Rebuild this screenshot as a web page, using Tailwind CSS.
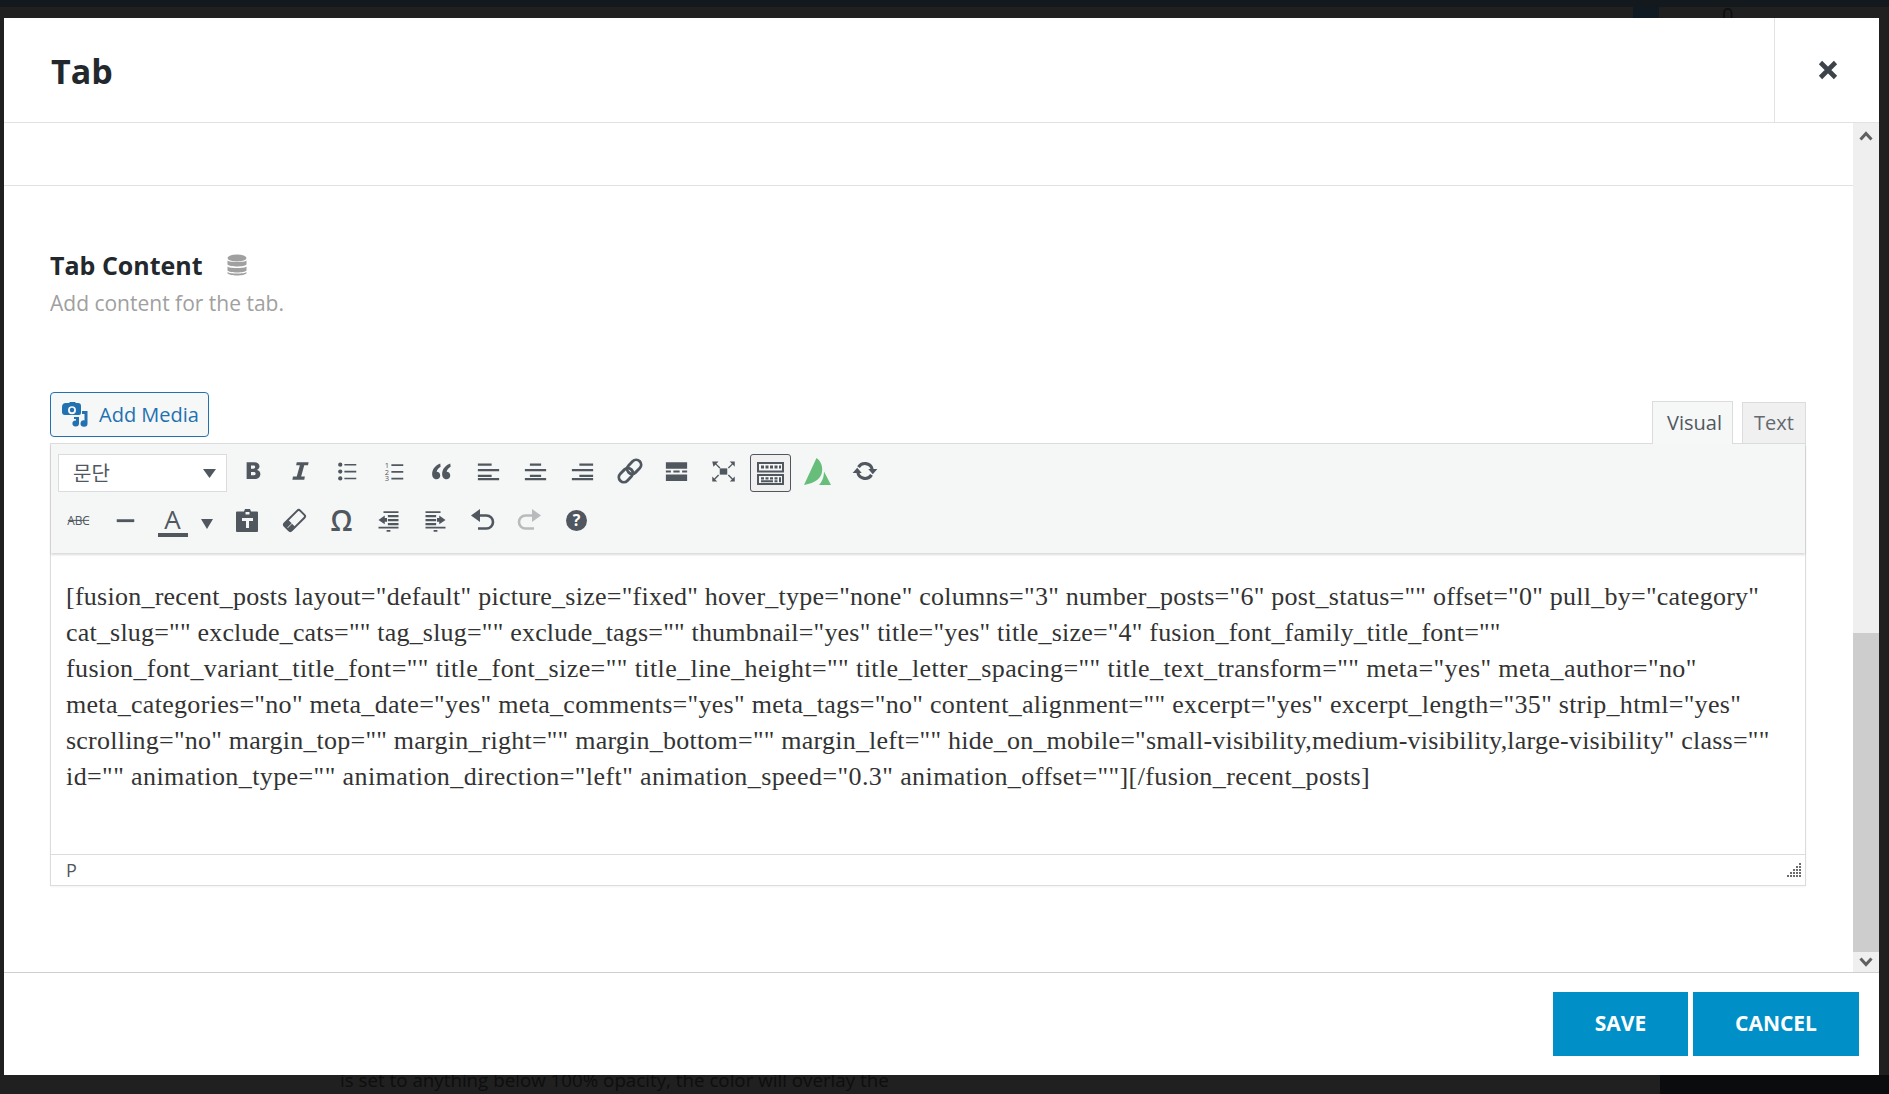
<!DOCTYPE html>
<html lang="en">
  <head>
    <meta charset="UTF-8" />
    <meta name="viewport" content="width=device-width, initial-scale=1.0" />
    <script src="https://cdn.jsdelivr.net/npm/@tailwindcss/browser@4"></script>
  </head>
  <body class="bg-[#202020] font-['Open_Sans',sans-serif] overflow-hidden">
    <div class="relative w-[1889px] h-[1094px] overflow-hidden">
      <!-- Page behind the overlay -->
      <div class="h-[7px] bg-[#14191e]"></div>
      <div class="absolute left-[1633px] top-[7px] w-[26px] h-[11px] bg-[#0f1a22]"></div>
      <div class="absolute left-[1722px] top-[2px] text-[20px] leading-[26px] text-[#0e0e0e]">0</div>
      <div class="absolute right-0 bottom-0 w-[229px] h-[19px] bg-[#0b0c0e]"></div>
      <div class="absolute left-[340px] top-[1067px] text-[18.750px] leading-[26px] text-[#0e0e0e] whitespace-nowrap">is set to anything below 100% opacity, the color will overlay the</div>

      <!-- Modal -->
      <div class="absolute left-[4px] top-[18px] w-[1875px] h-[1057px] bg-white flex flex-col">
        <!-- Header -->
        <div class="h-[105px] shrink-0 flex border-b border-[#e2e2e2]">
          <h1 class="flex-1 pl-[47px] pt-[25px] text-[34px] leading-[56px] font-bold text-[#23282d]">Tab</h1>
          <button class="w-[105px] pl-[2px] border-l border-[#e2e2e2] flex items-center justify-center">
            <svg class="w-[20px] h-[20px]" viewBox="0 0 20 20"><path d="M2.500 2.500l15 15M17.500 2.500l-15 15" stroke="#3c434a" stroke-width="4.600" /></svg>
          </button>
        </div>

        <!-- Body -->
        <div class="flex-1 flex min-h-0">
          <div class="flex-1 min-w-0">
            <div class="h-[63px] border-b border-[#e2e2e2]"></div>
            <div class="pl-[46px] pr-[47px]">
              <div class="pt-[62px] flex items-center h-[96px]">
                <h2 class="text-[25px] leading-[32px] font-bold text-[#23282d]">Tab Content</h2>
                <svg class="ml-[24px] w-[20px] h-[23px]" viewBox="0 0 20 23" fill="#a0a0a0">
                  <ellipse cx="10" cy="4" rx="9.500" ry="3.600" />
                  <path d="M.5 6.600c2 2 17 2 19 0v4c-2 2.600-17 2.600-19 0zM.5 12.600c2 2 17 2 19 0v4c-2 2.600-17 2.600-19 0z" />
                  <path d="M.5 18c2 2 17 2 19 0v1.200c-2 3-17 3-19 0z" />
                </svg>
              </div>
              <p class="mt-[6px] text-[21px] leading-[30px] text-[#a0a0a0]">Add content for the tab.</p>

              <!-- Media button and editor tabs -->
              <div class="mt-[73px] flex items-end justify-between h-[52px]">
                <button class="mb-[6px] w-[159px] h-[45px] rounded-[4px] border border-[#2271b1] bg-[#f6f7f7] text-[#2271b1] text-[20px] flex items-center pl-[11px]">
                  <svg class="w-[26px] h-[25px] shrink-0" viewBox="0 0 26 25" fill="#2271b1">
                    <path fill-rule="evenodd" d="M4 1h3l1-1h5l1 1h2a3 3 0 013 3v7a2 2 0 01-2 2H3a3 3 0 01-3-3V5a4 4 0 014-4zm6 3.200a4 4 0 100 8 4 4 0 000-8z" />
                    <circle cx="10" cy="8" r="2.200" />
                    <path d="M20 9h5.500v12.500a3.500 3.200 0 11-3-3.100V12H20zM12 15h5v6.500a3.300 3 0 11-3-3V17h-2z" />
                  </svg>
                  <span class="ml-[11px]">Add Media</span>
                </button>
                <div class="flex gap-[9px] items-end -mb-px">
                  <button class="w-[81px] h-[43px] pl-[4px] border border-[#dcdcde] border-b-0 bg-[#f6f7f7] text-[#50575e] text-[20px]">Visual</button>
                  <button class="w-[64px] h-[42px] border border-[#dcdcde] bg-[#f0f0f1] text-[#646970] text-[20px]">Text</button>
                </div>
              </div>

              <!-- Editor -->
              <div class="w-[1756px] h-[443px] border border-[#dcdcde] flex flex-col bg-white shadow-[0_1px_2px_rgba(0,0,0,0.05)]">
                <div class="h-[109px] shrink-0 bg-[#f5f6f6] pt-[10px] shadow-[0_2px_2px_rgba(0,0,0,0.14)] relative">
                  <!-- Row 1 -->
                  <div class="flex h-[38px] text-[#50575e] items-center">
                    <div class="ml-[7px] w-[169px] h-[38px] border border-[#dcdcde] bg-white flex items-center justify-between pl-[14px] pr-[10px] text-[20px] text-[#50575e] font-['Noto_Sans_CJK_KR',sans-serif]">
                      <span>문단</span>
                      <svg class="w-[13px] h-[10px]" viewBox="0 0 13 10" fill="#50575e"><path d="M0 1h13L6.500 10z" /></svg>
                    </div>
                    <div class="ml-[3px] w-[47px] flex justify-center -translate-y-[2px]">
                      <svg class="w-[25px] h-[25px]" viewBox="0 0 20 20" fill="currentColor"><path fill-rule="evenodd" d="M4.500 2.500h6c2.900 0 4.300 1.300 4.300 3.300 0 1.500-.9 2.500-2 2.900 1.500.3 2.700 1.500 2.700 3.300 0 2.500-1.800 4-4.600 4H4.500zM8 5.200v2.500h1.800c1 0 1.500-.4 1.500-1.300S10.800 5.200 9.800 5.200zm0 5.100V13h2c1.100 0 1.700-.5 1.700-1.400s-.6-1.300-1.700-1.300z" /></svg>
                    </div>
                    <div class="w-[47px] flex justify-center -translate-y-[2px]">
                      <svg class="w-[25px] h-[25px]" viewBox="0 0 20 20" fill="currentColor"><path d="M7 2.500h9.500L16 5h-3l-2.500 9h3L13 16.500H3.500L4 14h3l2.500-9h-3z" /></svg>
                    </div>
                    <div class="w-[47px] flex justify-center -translate-y-[2px]">
                      <svg class="w-[25px] h-[25px]" viewBox="0 0 20 20" fill="currentColor"><circle cx="4.200" cy="4.500" r="1.700" /><circle cx="4.200" cy="10" r="1.700" /><circle cx="4.200" cy="15.500" r="1.700" /><path d="M7.500 3.900h9.500v1.300H7.500zM7.500 9.400h9.500v1.300H7.500zM7.500 14.900h9.500v1.300H7.500z" /></svg>
                    </div>
                    <div class="w-[47px] flex justify-center -translate-y-[2px]">
                      <svg class="w-[25px] h-[25px]" viewBox="0 0 20 20" fill="currentColor"><text x="4" y="7" font-size="6" font-family="Open Sans" text-anchor="middle">1</text><text x="4" y="12.400" font-size="6" font-family="Open Sans" text-anchor="middle">2</text><text x="4" y="17.800" font-size="6" font-family="Open Sans" text-anchor="middle">3</text><path d="M7.500 4.200h9.500v1.300H7.500zM7.500 9.600h9.500v1.300H7.500zM7.500 15h9.500v1.300H7.500z" /></svg>
                    </div>
                    <div class="w-[47px] flex justify-center -translate-y-[2px]">
                      <svg class="w-[25px] h-[25px]" viewBox="0 0 20 20" fill="currentColor"><path d="M9 3.500C5.500 4.800 2.500 7.700 2.500 12c0 2.500 1.400 4.200 3.400 4.200 1.800 0 3.100-1.300 3.100-3s-1.200-3-2.900-3c.3-1.800 1.500-3.200 3.200-4.100z" /><path d="M17 3.500c-3.500 1.300-6.500 4.200-6.500 8.500 0 2.500 1.400 4.200 3.400 4.200 1.800 0 3.100-1.300 3.100-3s-1.200-3-2.900-3c.3-1.800 1.500-3.200 3.200-4.100z" /></svg>
                    </div>
                    <div class="w-[47px] flex justify-center -translate-y-[2px]">
                      <svg class="w-[25px] h-[25px]" viewBox="0 0 20 20" fill="currentColor"><path d="M1.500 3.500h11v1.800h-11zM1.500 8h17v1.800h-17zM1.500 12.500h11v1.800h-11zM1.500 17h17v-1.800h-17z" /></svg>
                    </div>
                    <div class="w-[47px] flex justify-center -translate-y-[2px]">
                      <svg class="w-[25px] h-[25px]" viewBox="0 0 20 20" fill="currentColor"><path d="M5.500 3.500h9v1.800h-9zM1.500 8h17v1.800h-17zM5.500 12.500h9v1.800h-9zM1.500 17h17v-1.800h-17z" /></svg>
                    </div>
                    <div class="w-[47px] flex justify-center -translate-y-[2px]">
                      <svg class="w-[25px] h-[25px]" viewBox="0 0 20 20" fill="currentColor"><path d="M7.500 3.500h11v1.800h-11zM1.500 8h17v1.800h-17zM7.500 12.500h11v1.800h-11zM1.500 17h17v-1.800h-17z" /></svg>
                    </div>
                    <div class="w-[47px] flex justify-center -translate-y-[2px]">
                      <svg class="w-[26px] h-[26px]" viewBox="0 0 20 20" fill="none" stroke="currentColor" stroke-width="2.200"><g transform="rotate(-45 10 10)"><rect x="-.5" y="6.200" width="12" height="7.600" rx="3.800" /><rect x="8.500" y="6.200" width="12" height="7.600" rx="3.800" /></g></svg>
                    </div>
                    <div class="w-[47px] flex justify-center -translate-y-[2px]">
                      <svg class="w-[25px] h-[25px]" viewBox="0 0 20 20" fill="currentColor"><path d="M1.500 2.500h17v5.200h-17zM1.500 9.200h4v1.600h-4zM7.500 9.200h5v1.600h-5zM14.500 9.200h4v1.600h-4zM1.500 12.300h17v5.200h-17z" /></svg>
                    </div>
                    <div class="w-[47px] flex justify-center -translate-y-[2px]">
                      <svg class="w-[25px] h-[25px]" viewBox="0 0 20 20" fill="currentColor"><path d="M7 7.500h6v5H7z" /><path d="M1 2h5l-1.700 1.700 3.200 3.100-.8.800-3.100-3.200L2 6.100zM19 2v4.100l-1.600-1.700-3.100 3.200-.8-.8 3.200-3.100L15 2zM1 18v-4.100l1.600 1.700 3.100-3.200.8.800-3.200 3.100L5 18zM19 18h-4l1.700-1.700-3.200-3.100.8-.8 3.100 3.200 1.600-1.700z" /></svg>
                    </div>
                    <div class="w-[41px] h-[38px] mx-[3px] rounded-[3px] border border-[#50575e] bg-[#f0f0f1] flex items-center justify-center">
                      <svg class="w-[27px] h-[25px]" viewBox="0 0 27 25">
                        <path fill="#50575e" d="M0 1h27v10.500H0zM0 13h27v11H0z" />
                        <path fill="#f5f6f6" d="M2 3h23v6.500H2zM2 15h23v7H2z" />
                        <path fill="#50575e" d="M4 4.500h3v3H4zM8.500 4.500h3v3h-3zM13 4.500h3v3h-3zM17.500 4.500h3v3h-3zM22 4.500h2v3h-2zM4 16.200h3v2.200H4zM8.500 16.200h3v2.200h-3zM13 16.200h3v2.200h-3zM17.500 16.200h3v2.200h-3zM22 16.200h2v5h-2zM4 19.200h12v2H4zM17.500 19.200h3v2h-3z" />
                      </svg>
                    </div>
                    <div class="w-[47px] flex justify-center -translate-y-[2px]">
                      <svg class="w-[27px] h-[27px]" viewBox="0 0 27 27" fill="#67bd7a"><path d="M12.500 0C17 3 19 9 18 14 17 20 12 25 0 27z" /><path d="M20 13.500L27 27H15c3-3 5-8 5-13.500z" /></svg>
                    </div>
                    <div class="w-[47px] flex justify-center -translate-y-[2px]">
                      <svg class="w-[26px] h-[26px]" viewBox="0 0 20 20" fill="currentColor"><path fill="none" stroke="currentColor" stroke-width="2.400" d="M15.500 8.500A5.800 5.800 0 005 7M4.500 11.500A5.800 5.800 0 0015 13" /><path d="M12.500 8.500h7l-3.500 4zM.5 11.500h7l-3.500-4z" /></svg>
                    </div>
                  </div>
                  <!-- Row 2 -->
                  <div class="flex mt-[11px] h-[38px] text-[#50575e] items-center pl-[4px]">
                    <div class="w-[47px] flex justify-center -translate-y-[2px]">
                      <svg class="w-[25px] h-[25px]" viewBox="0 0 20 20" fill="currentColor"><text x="10" y="13.300" font-size="9.500" text-anchor="middle" font-family="Open Sans">ABC</text><path d="M1.500 9.500h17v.8h-17z" /></svg>
                    </div>
                    <div class="w-[47px] flex justify-center -translate-y-[2px]">
                      <svg class="w-[25px] h-[25px]" viewBox="0 0 20 20" fill="currentColor"><path d="M3 9h14v2.300H3z" /></svg>
                    </div>
                    <div class="w-[47px] h-[38px] flex flex-col items-center">
                      <span class="text-[26px] leading-[30px] mt-[1px] text-[#50575e]">A</span>
                      <div class="w-[30px] h-[4px] bg-[#50575e] -mt-[1px]"></div>
                    </div>
                    <div class="w-[28px] flex justify-start pl-[5px]">
                      <svg class="w-[12px] h-[10px] mt-[3px]" viewBox="0 0 12 10" fill="#50575e"><path d="M0 0h12L6 10z" /></svg>
                    </div>
                    <div class="w-[47px] flex justify-center -translate-y-[2px]">
                      <svg class="w-[25px] h-[25px]" viewBox="0 0 25 25" fill="currentColor"><path fill-rule="evenodd" d="M9 3.500l1-2.500h5l1 2.500h6a1 1 0 011 1V23a1 1 0 01-1 1H2a1 1 0 01-1-1V4.500a1 1 0 011-1zM10.500 4v2.500h4V4zM7 10v3h4v7h3v-7h4v-3z" /></svg>
                    </div>
                    <div class="w-[47px] flex justify-center -translate-y-[2px]">
                      <svg class="w-[25px] h-[25px]" viewBox="0 0 25 25"><g transform="rotate(-45 12.500 12.500)"><rect x="1.500" y="7.500" width="22" height="10" rx="2" fill="none" stroke="#50575e" stroke-width="2" /><path d="M1.500 12.500h7v-5h-5a2 2 0 00-2 2zM1.500 13h7v5h-5a2 2 0 01-2-2z" fill="#50575e" /></g></svg>
                    </div>
                    <div class="w-[47px] flex justify-center -translate-y-[2px]">
                      <span class="text-[28px] leading-[38px] font-semibold text-[#50575e]">Ω</span>
                    </div>
                    <div class="w-[47px] flex justify-center -translate-y-[2px]">
                      <svg class="w-[25px] h-[25px]" viewBox="0 0 20 20" fill="currentColor"><path d="M6 2.500h12v1.400H6zM9.500 5.500h8.500v1.800H9.500zM9.500 8.800h8.500v1.800H9.500zM9.500 12h8.500v1.800H9.500zM2 15h16v1.400H2zM8.500 17.500h3v1.400h-3zM2 9.500L7 6v2h1.800v3H7v2z" /></svg>
                    </div>
                    <div class="w-[47px] flex justify-center -translate-y-[2px]">
                      <svg class="w-[25px] h-[25px]" viewBox="0 0 20 20" fill="currentColor"><path d="M2 2.500h12v1.400H2zM2 5.500h8.500v1.800H2zM2 8.800h8.500v1.800H2zM2 12h8.500v1.800H2zM2 15h16v1.400H2zM8.500 17.500h3v1.400h-3zM18 9.500L13 6v2h-1.800v3H13v2z" /></svg>
                    </div>
                    <div class="w-[47px] flex justify-center -translate-y-[2px]">
                      <svg class="w-[25px] h-[25px]" viewBox="0 0 25 25" fill="currentColor"><path d="M1 7.500L10 1v13z" /><path fill="none" stroke="currentColor" stroke-width="2.600" d="M9 7.500h7.500a6.300 6.300 0 010 13H8" /></svg>
                    </div>
                    <div class="w-[47px] flex justify-center -translate-y-[2px]">
                      <svg class="w-[25px] h-[25px]" viewBox="0 0 25 25" fill="#b8babc"><path d="M24 7.500L15 1v13z" /><path fill="none" stroke="#b8babc" stroke-width="2.600" d="M16 7.500H8.500a6.300 6.300 0 000 13H17" /></svg>
                    </div>
                    <div class="w-[47px] flex justify-center -translate-y-[2px]">
                      <div class="w-[21px] h-[21px] rounded-full bg-[#50575e] text-white font-bold text-[16px] leading-[21px] text-center">?</div>
                    </div>
                  </div>
                </div>

                <!-- Shortcode text -->
                <div class="flex-1 pt-[26px] pl-[15px] font-['Liberation_Serif',serif] text-[26px] leading-[36px] text-[#333] whitespace-nowrap">
                  <div class="tracking-[0.25px]">[fusion_recent_posts layout="default" picture_size="fixed" hover_type="none" columns="3" number_posts="6" post_status="" offset="0" pull_by="category"</div>
                  <div class="tracking-[0.20px]">cat_slug="" exclude_cats="" tag_slug="" exclude_tags="" thumbnail="yes" title="yes" title_size="4" fusion_font_family_title_font=""</div>
                  <div class="tracking-[0.41px]">fusion_font_variant_title_font="" title_font_size="" title_line_height="" title_letter_spacing="" title_text_transform="" meta="yes" meta_author="no"</div>
                  <div class="tracking-[0.30px]">meta_categories="no" meta_date="yes" meta_comments="yes" meta_tags="no" content_alignment="" excerpt="yes" excerpt_length="35" strip_html="yes"</div>
                  <div class="tracking-[0.23px]">scrolling="no" margin_top="" margin_right="" margin_bottom="" margin_left="" hide_on_mobile="small-visibility,medium-visibility,large-visibility" class=""</div>
                  <div class="tracking-[0.41px]">id="" animation_type="" animation_direction="left" animation_speed="0.3" animation_offset=""][/fusion_recent_posts]</div>
                </div>

                <!-- Status bar -->
                <div class="h-[31px] shrink-0 border-t border-[#dcdcde] flex items-center justify-between pl-[15px] pr-[3px] text-[18px] text-[#50575e]">
                  <span>P</span>
                  <svg class="w-[15px] h-[15px]" viewBox="0 0 15 15" fill="#6b6b6b">
                    <path d="M12 0h2v2h-2zM9 3h2v2H9zM12 3h2v2h-2zM6 6h2v2H6zM9 6h2v2H9zM12 6h2v2h-2zM3 9h2v2H3zM6 9h2v2H6zM9 9h2v2H9zM12 9h2v2h-2zM0 12h2v2H0zM3 12h2v2H3zM6 12h2v2H6zM9 12h2v2H9zM12 12h2v2h-2z" />
                  </svg>
                </div>
              </div>
            </div>
          </div>

          <!-- Scrollbar -->
          <div class="w-[26px] shrink-0 bg-[#efefef] flex flex-col">
            <div class="h-[26px] flex items-center justify-center">
              <svg class="w-[14px] h-[10px]" viewBox="0 0 14 10"><path d="M1.500 8.500L7 2.500l5.500 6" fill="none" stroke="#5f5f5f" stroke-width="3" /></svg>
            </div>
            <div class="flex-1"></div>
            <div class="h-[319px] bg-[#cdcdcd]"></div>
            <div class="h-[20px] flex items-center justify-center">
              <svg class="w-[14px] h-[10px]" viewBox="0 0 14 10"><path d="M1.500 1.500L7 7.500l5.500-6" fill="none" stroke="#5f5f5f" stroke-width="3" /></svg>
            </div>
          </div>
        </div>

        <!-- Footer -->
        <div class="h-[103px] shrink-0 border-t border-[#cfcfcf] flex justify-end gap-[5px] pt-[19px] pr-[20px]">
          <button class="w-[135px] h-[64px] bg-[#0090c7] text-white font-bold text-[21px]">SAVE</button>
          <button class="w-[166px] h-[64px] bg-[#0090c7] text-white font-bold text-[21px]">CANCEL</button>
        </div>
      </div>
    </div>
  </body>
</html>
